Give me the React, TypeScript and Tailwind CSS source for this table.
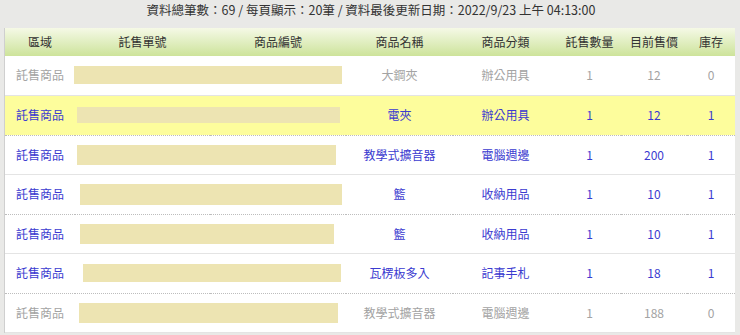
const cols = [
  { label: "區域", w: "w-[70px]" },
  { label: "託售單號", w: "w-[135px]" },
  { label: "商品編號", w: "w-[136px]" },
  { label: "商品名稱", w: "w-[107px]" },
  { label: "商品分類", w: "w-[105px]" },
  { label: "託售數量", w: "w-[63px]" },
  { label: "目前售價", w: "w-[66px]" },
  { label: "庫存", w: "w-[48px]" },
];

type Row = {
  name: string;
  cat: string;
  qty: number;
  price: number;
  stock: number;
  bar: [number, number, number]; // left offset, width, height
  hl?: boolean;
};

const rows: Row[] = [
  { name: "大鋼夾", cat: "辦公用具", qty: 1, price: 12, stock: 0, bar: [-1, 268, 18] },
  { name: "電夾", cat: "辦公用具", qty: 1, price: 12, stock: 1, bar: [2, 263, 16], hl: true },
  { name: "教學式擴音器", cat: "電腦週邊", qty: 1, price: 200, stock: 1, bar: [2, 259, 20] },
  { name: "籃", cat: "收納用品", qty: 1, price: 10, stock: 1, bar: [5, 262, 21] },
  { name: "籃", cat: "收納用品", qty: 1, price: 10, stock: 1, bar: [5, 254, 20] },
  { name: "瓦楞板多入", cat: "記事手札", qty: 1, price: 18, stock: 1, bar: [8, 258, 18] },
  { name: "教學式擴音器", cat: "電腦週邊", qty: 1, price: 188, stock: 0, bar: [4, 259, 20] },
];

export default function App() {
  return (
    <div
      className="h-[335px] w-[740px] overflow-hidden bg-[#e9e9e7] text-[12px] text-[#333]"
      style={{ fontFamily: '"Noto Sans CJK TC", "Noto Sans", sans-serif' }}
    >
      <div className="flex h-[28px] items-start justify-center pt-[1px] pl-[2px] text-[12.5px] leading-[18px] text-[#333]">
        資料總筆數：69 / 每頁顯示：20筆 / 資料最後更新日期：2022/9/23 上午 04:13:00
      </div>
      <div className="ml-[4px] w-[731px] border-x border-[#cfcfcf] bg-white">
        <table className="w-full table-fixed border-collapse">
          <thead>
            <tr className="h-[28px] bg-gradient-to-b from-[#f5f9e6] to-[#cde39a]">
              {cols.map((c) => (
                <th key={c.label} className={`${c.w} p-0 text-center font-normal text-[#333]`}>
                  {c.label}
                </th>
              ))}
            </tr>
          </thead>
          <tbody>
            {rows.map((r, i) => {
              const tone = r.stock === 0 ? "text-[#a3a3a3]" : "text-[#3b3bd0]";
              const border =
                i % 2 === 0 ? "border-b border-solid border-[#e4e4e4]" : "border-b border-dotted border-[#bdbdbd]";
              return (
                <tr
                  key={i}
                  className={`${i % 2 === 0 ? "h-[39px]" : "h-[40px]"} ${border} ${r.hl ? "bg-[#fdfd9c]" : "bg-white"} ${tone}`}
                >
                  <td className="p-0 text-center">託售商品</td>
                  <td colSpan={2} className="p-0">
                    <div
                      className="bg-[#ede4b2]"
                      style={{ marginLeft: r.bar[0], width: r.bar[1], height: r.bar[2] }}
                    />
                  </td>
                  <td className="p-0 text-center">{r.name}</td>
                  <td className="p-0 text-center">{r.cat}</td>
                  <td className="p-0 text-center">{r.qty}</td>
                  <td className="p-0 text-center">{r.price}</td>
                  <td className="p-0 text-center">{r.stock}</td>
                </tr>
              );
            })}
          </tbody>
        </table>
      </div>
    </div>
  );
}
